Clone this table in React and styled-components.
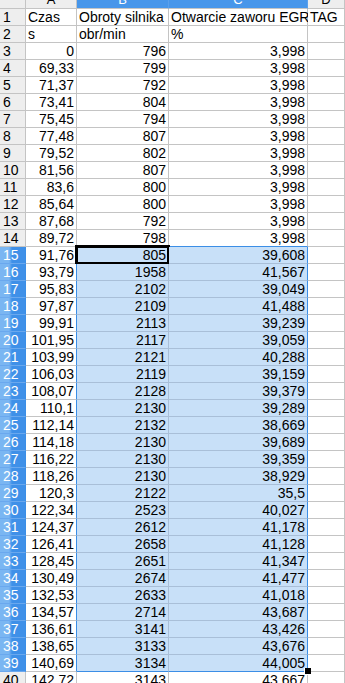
import React from 'react';
import styled, { createGlobalStyle } from 'styled-components';

const GlobalStyle = createGlobalStyle`
    html, body {
        margin: 0;
        padding: 0;
        background: #ffffff;
        overflow: hidden;
    }
    body {
        font-family: "Liberation Sans", Arial, sans-serif;
    }
`;

const GRID = '#c4c4c4';
const SEL_GRID = '#a9bfd8';
const SEL_EDGE = '#3b8ee6';

const Sheet = styled.div`
    display: grid;
    grid-template-columns: 26px 51px 92px 139px 1fr;
    grid-auto-rows: 17px;
    grid-template-rows: 9px;
    width: 345px;
    height: 683px;
    overflow: hidden;
    font-size: 14px;
    color: #000;
`;

const ColHead = styled.div`
    box-sizing: border-box;
    display: flex;
    align-items: flex-end;
    justify-content: center;
    overflow: hidden;
    line-height: 16px;
    font-size: 13px;
    color: ${p => (p.selected ? '#ffffff' : '#000')};
    background: ${p => (p.selected ? '#4796ea' : '#eeeeee')};
    border-right: 1px solid ${p => (p.selected ? '#5aa0ec' : GRID)};
    border-bottom: 1px solid ${GRID};
`;

const Corner = styled.div`
    box-sizing: border-box;
    background: #eeeeee;
    border-right: 1px solid ${GRID};
    border-bottom: 1px solid ${GRID};
`;

const RowHead = styled.div`
    box-sizing: border-box;
    padding-left: 3px;
    line-height: 16px;
    font-size: 14px;
    color: ${p => (p.selected ? '#ffffff' : '#000')};
    background: ${p =>
        p.selected
            ? 'linear-gradient(to right, #7ab6f2 0, #7ab6f2 9px, #3f90e8 12px, #3f90e8 100%)'
            : '#eeeeee'};
    border-right: 1px solid ${p => (p.selected ? SEL_EDGE : GRID)};
    border-bottom: 1px solid ${p => (p.selected ? '#6aa8ee' : GRID)};
`;

const Cell = styled.div`
    position: relative;
    box-sizing: border-box;
    padding: 0 2px;
    line-height: 16px;
    white-space: nowrap;
    overflow: visible;
    text-align: ${p => (p.num ? 'right' : 'left')};
    background: ${p => (p.selected ? '#c8e0f8' : '#ffffff')};
    border-right: 1px solid ${p => p.rightColor};
    border-bottom: 1px solid ${p => p.bottomColor};
`;

const Text = styled.span`
    position: relative;
`;

const ActiveFrame = styled.span`
    position: absolute;
    left: -2px;
    top: -2px;
    right: -2px;
    bottom: -2px;
    border: 3px solid #000;
    pointer-events: none;
`;

const FillHandle = styled.span`
    position: absolute;
    right: -4px;
    bottom: -4px;
    width: 6px;
    height: 6px;
    background: #000;
    border: 1px solid #fff;
    border-width: 0 0 1px 1px;
    z-index: 3;
`;

const rows = [
    ['Czas', 'Obroty silnika', 'Otwarcie zaworu EGR', 'TAG'],
    ['s', 'obr/min', '%', ''],
    ['0', '796', '3,998'],
    ['69,33', '799', '3,998'],
    ['71,37', '792', '3,998'],
    ['73,41', '804', '3,998'],
    ['75,45', '794', '3,998'],
    ['77,48', '807', '3,998'],
    ['79,52', '802', '3,998'],
    ['81,56', '807', '3,998'],
    ['83,6', '800', '3,998'],
    ['85,64', '800', '3,998'],
    ['87,68', '792', '3,998'],
    ['89,72', '798', '3,998'],
    ['91,76', '805', '39,608'],
    ['93,79', '1958', '41,567'],
    ['95,83', '2102', '39,049'],
    ['97,87', '2109', '41,488'],
    ['99,91', '2113', '39,239'],
    ['101,95', '2117', '39,059'],
    ['103,99', '2121', '40,288'],
    ['106,03', '2119', '39,159'],
    ['108,07', '2128', '39,379'],
    ['110,1', '2130', '39,289'],
    ['112,14', '2132', '38,669'],
    ['114,18', '2130', '39,689'],
    ['116,22', '2130', '39,359'],
    ['118,26', '2130', '38,929'],
    ['120,3', '2122', '35,5'],
    ['122,34', '2523', '40,027'],
    ['124,37', '2612', '41,178'],
    ['126,41', '2658', '41,128'],
    ['128,45', '2651', '41,347'],
    ['130,49', '2674', '41,477'],
    ['132,53', '2633', '41,018'],
    ['134,57', '2714', '43,687'],
    ['136,61', '3141', '43,426'],
    ['138,65', '3133', '43,676'],
    ['140,69', '3134', '44,005'],
    ['142,72', '3143', '43,667'],
];

const SEL_TOP = 15;
const SEL_BOTTOM = 39;

const inSel = (r, c) => r >= SEL_TOP && r <= SEL_BOTTOM && (c === 1 || c === 2);

const App = () => (
    <>
        <GlobalStyle />
        <Sheet>
            <Corner />
            <ColHead>A</ColHead>
            <ColHead selected>B</ColHead>
            <ColHead selected>C</ColHead>
            <ColHead>D</ColHead>
            {rows.map((row, i) => {
                const r = i + 1;
                const rowSel = r >= SEL_TOP && r <= SEL_BOTTOM;
                return (
                    <React.Fragment key={r}>
                        <RowHead selected={rowSel}>{r}</RowHead>
                        {[0, 1, 2, 3].map(c => {
                            const value = row[c] || '';
                            const sel = inSel(r, c);
                            let rightColor = sel ? SEL_GRID : GRID;
                            if ((c === 0 || c === 2) && rowSel) rightColor = SEL_EDGE;
                            let bottomColor = sel ? SEL_GRID : GRID;
                            if ((c === 1 || c === 2) && (r === SEL_TOP - 1 || r === SEL_BOTTOM)) bottomColor = SEL_EDGE;
                            return (
                                <Cell
                                    key={c}
                                    num={r > 2}
                                    selected={sel}
                                    rightColor={rightColor}
                                    bottomColor={bottomColor}
                                >
                                    <Text>{value}</Text>
                                    {r === SEL_TOP && c === 1 && <ActiveFrame />}
                                    {r === SEL_BOTTOM && c === 2 && <FillHandle />}
                                </Cell>
                            );
                        })}
                    </React.Fragment>
                );
            })}
        </Sheet>
    </>
);

export default App;
